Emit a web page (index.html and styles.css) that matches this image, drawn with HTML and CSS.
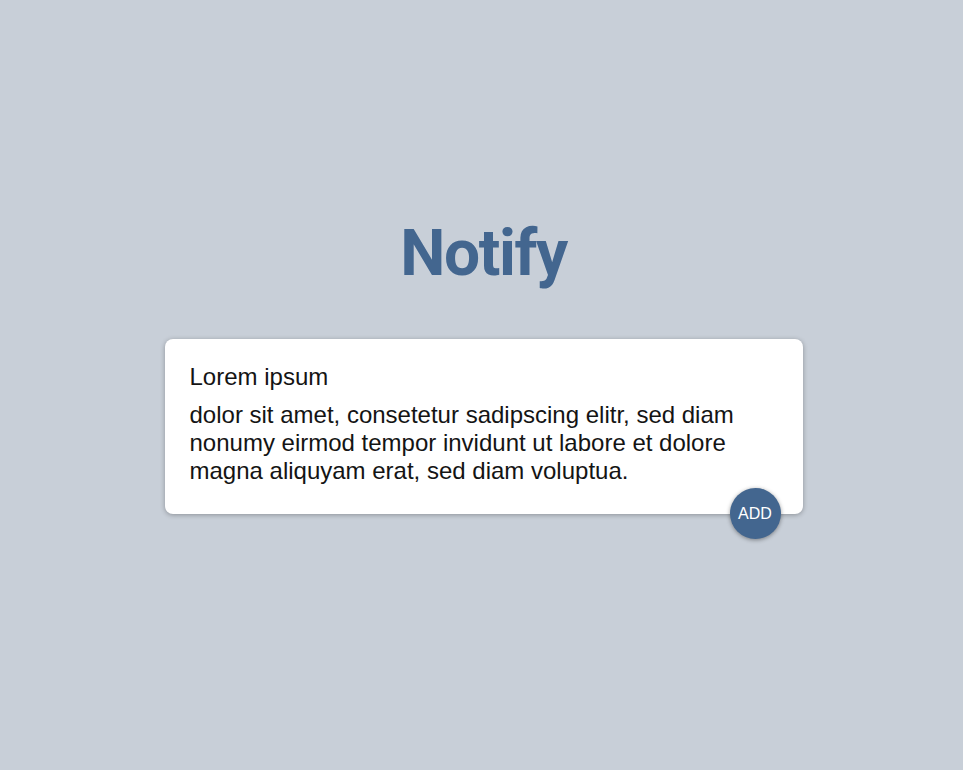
FILE: index.html
```html
<!DOCTYPE html>
<html>
<head>
<meta charset="utf-8">
<link rel="stylesheet" href="styles.css">
</head>
<body>
<main class="page">
  <h1 class="brand">Notify</h1>
  <div class="note">
    <div class="note-title">Lorem ipsum</div>
    <p class="note-body">dolor sit amet, consetetur sadipscing elitr, sed diam nonumy eirmod tempor invidunt ut labore et dolore magna aliquyam erat, sed diam voluptua.</p>
    <button class="add-btn">ADD</button>
  </div>
</main>
</body>
</html>
```
FILE: styles.css
```css
html, body {
  margin: 0;
  padding: 0;
  background: #c8cfd8;
  height: 100%;
}
.page {
  display: flex;
  flex-direction: column;
  align-items: center;
  padding: 216px 0 0 4px;
  font-family: "Liberation Sans", Arial, sans-serif;
}
.brand {
  margin: 0;
  font-family: Roboto, "Noto Sans", sans-serif;
  font-weight: 700;
  font-size: 64px;
  line-height: 76px;
  letter-spacing: -1.4px;
  color: #43668f;
}
.note {
  position: relative;
  margin-top: 47px;
  width: 590px;
  padding: 24px 23px 29px 25px;
  background: #fff;
  border-radius: 8px;
  box-shadow: 0 1px 5px rgba(0,0,0,0.3);
  color: #141414;
}
.note-title {
  font-size: 24px;
  line-height: 28px;
}
.note-body {
  margin: 10px 0 0;
  font-size: 24px;
  line-height: 28px;
}
.add-btn {
  position: absolute;
  right: 22px;
  bottom: -25px;
  width: 51px;
  height: 51px;
  border-radius: 50%;
  border: none;
  background: #43668f;
  color: #fff;
  font-family: "Liberation Sans", Arial, sans-serif;
  font-size: 16px;
  padding: 0;
  box-shadow: 0 1px 4px rgba(0,0,0,0.4);
}
```
